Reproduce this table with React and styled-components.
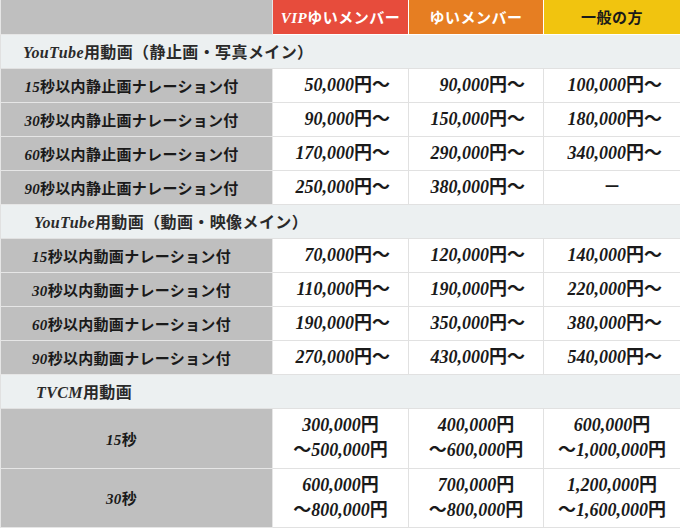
import styled, { createGlobalStyle } from "styled-components";

const GlobalStyle = createGlobalStyle`
  body {
    margin: 0;
    background: #fff;
  }
`;

const sections = [
  {
    title: "YouTube用動画（静止画・写真メイン）",
    indent: 22,
    rows: [
      ["15秒以内静止画ナレーション付", "50,000円～", "90,000円～", "100,000円～"],
      ["30秒以内静止画ナレーション付", "90,000円～", "150,000円～", "180,000円～"],
      ["60秒以内静止画ナレーション付", "170,000円～", "290,000円～", "340,000円～"],
      ["90秒以内静止画ナレーション付", "250,000円～", "380,000円～", "－"],
    ],
  },
  {
    title: "YouTube用動画（動画・映像メイン）",
    indent: 33,
    rows: [
      ["15秒以内動画ナレーション付", "70,000円～", "120,000円～", "140,000円～"],
      ["30秒以内動画ナレーション付", "110,000円～", "190,000円～", "220,000円～"],
      ["60秒以内動画ナレーション付", "190,000円～", "350,000円～", "380,000円～"],
      ["90秒以内動画ナレーション付", "270,000円～", "430,000円～", "540,000円～"],
    ],
  },
];

const tvcm = [
  ["15秒", ["300,000円", "～500,000円"], ["400,000円", "～600,000円"], ["600,000円", "～1,000,000円"]],
  ["30秒", ["600,000円", "～800,000円"], ["700,000円", "～800,000円"], ["1,200,000円", "～1,600,000円"]],
];

const App = () => {
  return (
    <>
      <GlobalStyle />
      <Table>
        <colgroup>
          <col style={{ width: 272 }} />
          <col style={{ width: 136 }} />
          <col style={{ width: 135 }} />
          <col style={{ width: 137 }} />
        </colgroup>
        <tbody>
          <HeadRow>
            <Label />
            <Head $bg="#e74c3c">VIPゆいメンバー</Head>
            <Head $bg="#e67e22">ゆいメンバー</Head>
            <Head $bg="#f1c40f" $dark>
              一般の方
            </Head>
          </HeadRow>
          {sections.map((section) => (
            <Section key={section.title} {...section} />
          ))}
          <SectionRow>
            <SectionCell colSpan={4} $indent={35}>
              TVCM用動画
            </SectionCell>
          </SectionRow>
          {tvcm.map(([label, ...prices], i) => (
            <TallRow key={label} $h={i === 0 ? 60 : 59}>
              <Label $pad={30}>{label}</Label>
              {prices.map((lines, j) => (
                <Price key={j} $center>
                  {lines[0]}
                  <br />
                  {lines[1]}
                </Price>
              ))}
            </TallRow>
          ))}
        </tbody>
      </Table>
    </>
  );
};

const Section = ({ title, indent, rows }) => (
  <>
    <SectionRow>
      <SectionCell colSpan={4} $indent={indent}>
        {title}
      </SectionCell>
    </SectionRow>
    {rows.map(([label, ...prices]) => (
      <Row key={label}>
        <Label $pad={10}>{label}</Label>
        {prices.map((p, j) => (
          <Price key={j} $center={p === "－"}>
            {p}
          </Price>
        ))}
      </Row>
    ))}
  </>
);

const Table = styled.table`
  width: 680px;
  table-layout: fixed;
  border-collapse: collapse;
  font-family: "Liberation Serif", "Noto Sans CJK JP", serif;
  font-weight: bold;
  font-style: oblique 12deg;
  font-synthesis: weight style;
  color: #1a1a1a;

  td {
    border: 1px solid #e1e1e1;
    padding: 0;
  }
`;

const HeadRow = styled.tr`
  height: 34px;

  td {
    border-color: #fff;
    border-top: none;
  }
`;

const Head = styled.td`
  background: ${(p) => p.$bg};
  color: ${(p) => (p.$dark ? "#1a1a1a" : "#fff")};
  text-align: center;
  font-size: 15px;
  letter-spacing: 0.5px;
`;

const Row = styled.tr`
  height: 34px;
`;

const TallRow = styled.tr`
  height: ${(p) => p.$h}px;
`;

const SectionRow = styled.tr`
  height: 34px;
`;

const SectionCell = styled.td`
  background: #ecf0f1;
  color: #2a2a2a;
  font-size: 16px;
  letter-spacing: 0.4px;
  padding-left: ${(p) => p.$indent}px !important;
  text-align: left;
`;

const Label = styled.td`
  background: #bfbfbf;
  text-align: center;
  font-size: 15px;
  letter-spacing: 0.3px;
  padding-right: ${(p) => p.$pad || 0}px !important;
  border-color: #e6e6e6 !important;
`;

const Price = styled.td`
  background: #fff;
  font-size: 18px;
  line-height: 25px;
  text-align: ${(p) => (p.$center ? "center" : "right")};
  padding-right: ${(p) => (p.$center ? 0 : 18)}px !important;
`;

export default App;
